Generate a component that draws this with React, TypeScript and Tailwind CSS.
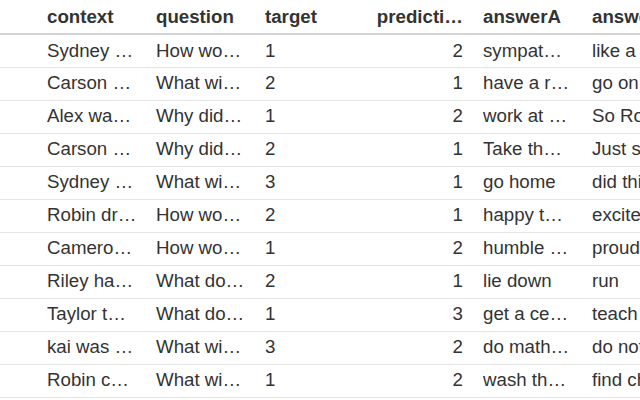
const rows = [
  ["Sydney …", "How wo…", "1", "2", "sympat…", "like a person who was unable to help"],
  ["Carson …", "What wi…", "2", "1", "have a r…", "go on the bus"],
  ["Alex wa…", "Why did…", "1", "2", "work at …", "So Robin could help"],
  ["Carson …", "Why did…", "2", "1", "Take th…", "Just say hello"],
  ["Sydney …", "What wi…", "3", "1", "go home", "did this to have fun"],
  ["Robin dr…", "How wo…", "2", "1", "happy t…", "excited about it"],
  ["Camero…", "How wo…", "1", "2", "humble …", "proud"],
  ["Riley ha…", "What do…", "2", "1", "lie down", "run"],
  ["Taylor t…", "What do…", "1", "3", "get a ce…", "teach"],
  ["kai was …", "What wi…", "3", "2", "do math…", "do nothing"],
  ["Robin c…", "What wi…", "1", "2", "wash th…", "find chairs"],
];

const headers = ["context", "question", "target", "predicti…", "answerA", "answerB"];

export default function App() {
  return (
    <div className="w-[640px] h-[400px] overflow-hidden bg-white" style={{ fontFamily: '"Liberation Sans", Arial, sans-serif' }}>
      <table className="table-fixed border-collapse w-[691px] text-[18.7px] text-[#333333]">
        <colgroup>
          <col className="w-[37px]" />
          {headers.map((h) => (
            <col key={h} className="w-[109px]" />
          ))}
        </colgroup>
        <thead>
          <tr className="h-[34px] border-b-2 border-[#d3d3d3]">
            <th></th>
            {headers.map((h, j) => (
              <th
                key={h}
                className={`pl-[10px] pr-[10px] pt-[1px] font-bold text-[#333333] whitespace-nowrap overflow-hidden ${j === 3 ? "text-right" : "text-left"}`}
              >
                {h}
              </th>
            ))}
          </tr>
        </thead>
        <tbody>
          {rows.map((r, i) => (
            <tr key={i} className="h-[33px] border-b border-[#e5e5e5]">
              <td></td>
              {r.map((c, j) => (
                <td
                  key={j}
                  className={`pl-[10px] pr-[10px] whitespace-nowrap overflow-hidden ${j === 3 ? "text-right" : "text-left"}`}
                >
                  {c}
                </td>
              ))}
            </tr>
          ))}
        </tbody>
      </table>
    </div>
  );
}
